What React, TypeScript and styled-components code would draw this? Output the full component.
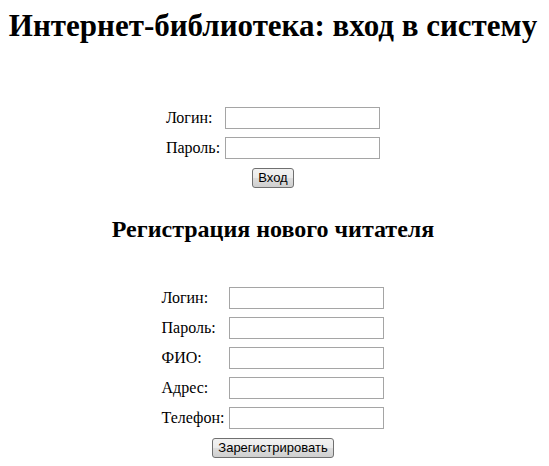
import React from 'react';
import styled, { createGlobalStyle } from 'styled-components';

const GlobalStyle = createGlobalStyle`
  body {
    margin: 8px 11px 8px 8px;
    background: #fff;
    color: #000;
    font-family: "Liberation Serif", "Times New Roman", serif;
  }
`;

const Page = styled.div`
  display: flex;
  flex-direction: column;
  align-items: center;
`;

const Title = styled.h1`
  margin: 0;
  font-size: 31px;
  line-height: 36px;
  font-weight: bold;
  white-space: nowrap;
  text-align: center;
`;

const SubTitle = styled.h2`
  margin: 0;
  font-size: 24px;
  font-weight: bold;
  text-align: center;
`;

const Form = styled.form<{ $top: number; $bottom: number }>`
  display: grid;
  grid-template-columns: auto auto;
  column-gap: 5px;
  row-gap: 8px;
  align-items: center;
  margin: ${(p) => p.$top}px 0 ${(p) => p.$bottom}px;
`;

const Label = styled.label`
  font-size: 16px;
  line-height: 22px;
`;

const Field = styled.input`
  box-sizing: border-box;
  width: 155px;
  height: 22px;
  margin: 0;
  padding: 1px 3px;
  border: 1px solid #a5a5a5;
  background: #fff;
`;

const Actions = styled.div`
  grid-column: 1 / -1;
  display: flex;
  justify-content: center;
  padding-top: 1px;
`;

const Button = styled.button`
  font-family: "Liberation Sans", Arial, sans-serif;
  font-size: 13px;
  line-height: 15px;
  padding: 1px 5px 2px;
  color: #000;
  border: 1px solid #707070;
  border-radius: 3px;
  background: linear-gradient(to bottom, #f2f2f2 0%, #ebebeb 50%, #dddddd 51%, #cfcfcf 100%);
  cursor: pointer;
`;

const loginFields = ['Логин:', 'Пароль:'];
const registerFields = ['Логин:', 'Пароль:', 'ФИО:', 'Адрес:', 'Телефон:'];

const App: React.FC = () => {
  return (
    <Page>
      <GlobalStyle />
      <Title>Интернет-библиотека: вход в систему</Title>
      <Form $top={63} $bottom={28} onSubmit={(e) => e.preventDefault()}>
        {loginFields.map((f) => (
          <React.Fragment key={f}>
            <Label>{f}</Label>
            <Field type={f === 'Пароль:' ? 'password' : 'text'} />
          </React.Fragment>
        ))}
        <Actions>
          <Button type="submit">Вход</Button>
        </Actions>
      </Form>
      <SubTitle>Регистрация нового читателя</SubTitle>
      <Form $top={44} $bottom={0} onSubmit={(e) => e.preventDefault()}>
        {registerFields.map((f) => (
          <React.Fragment key={f}>
            <Label>{f}</Label>
            <Field type={f === 'Пароль:' ? 'password' : 'text'} />
          </React.Fragment>
        ))}
        <Actions>
          <Button type="submit">Зарегистрировать</Button>
        </Actions>
      </Form>
    </Page>
  );
};

export default App;
